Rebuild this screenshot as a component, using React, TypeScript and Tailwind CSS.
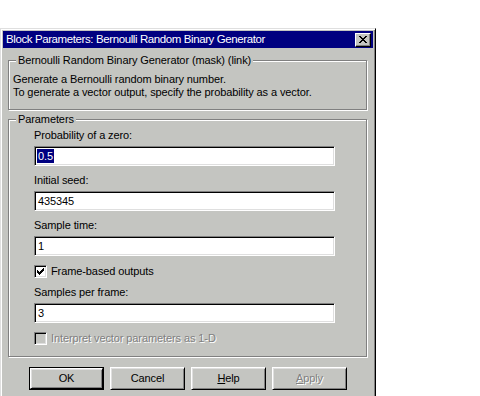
import React from 'react'

const face = 'bg-[#c4c5c1]'
const font = "font-['Liberation_Sans',Arial,sans-serif]"

const Field = ({ value, selected }: { value: string; selected?: boolean }) => (
    <div className="w-[301px] h-[20px] bg-white border border-t-[#808080] border-l-[#808080] border-r-white border-b-white shadow-[inset_1px_1px_0_#000,inset_-1px_-1px_0_#dfdfdf] flex items-center pl-[2px]">
        {selected ? (
            <span className="bg-[#000080] text-white leading-[14px] px-px">{value}</span>
        ) : (
            <span className="text-black leading-[14px] pl-px">{value}</span>
        )}
    </div>
)

const Label = ({ children }: { children: React.ReactNode }) => (
    <div className="h-[13px] leading-[13px] text-black">{children}</div>
)

const Button = ({ children, primary, disabled }: { children: React.ReactNode; primary?: boolean; disabled?: boolean }) => {
    const inner = (
        <div className={`h-full w-full border border-t-white border-l-white border-r-black border-b-black shadow-[inset_1px_1px_0_#dfdfdf,inset_-1px_-1px_0_#808080] flex items-center justify-center ${disabled ? 'text-[#808080] [text-shadow:1px_1px_0_#fff]' : 'text-black'}`}>
            {children}
        </div>
    )
    if (primary) {
        return <div className="w-[75px] h-[23px] border border-black">{inner}</div>
    }
    return <div className="w-[75px] h-[23px]">{inner}</div>
}

const Group = ({ title, className, children }: { title: string; className: string; children: React.ReactNode }) => (
    <div className={`relative border border-[#808080] shadow-[inset_1px_1px_0_#fff,1px_1px_0_#fff] ${className}`}>
        <div className={`absolute -top-[7px] left-[7px] px-[2px] ${face} leading-[13px] text-black`}>{title}</div>
        {children}
    </div>
)

export default function App() {
    return (
        <div className={`w-[480px] h-[396px] bg-white overflow-hidden text-[11px] tracking-[-0.1px] ${font}`}>
            <div className={`mt-[28px] w-[376px] h-[370px] ${face} border border-t-[#dfdfdf] border-l-[#dfdfdf] border-r-black border-b-black shadow-[inset_1px_1px_0_#fff,inset_-1px_-1px_0_#808080] p-[2px] flex flex-col`}>
                {/* title bar */}
                <div className="h-[17px] bg-[#000080] flex items-center justify-between pl-[3px] pr-[2px]">
                    <span className="text-white text-[11.5px] tracking-[-0.4px] leading-[17px]">
                        Block Parameters: Bernoulli Random Binary Generator
                    </span>
                    <div className={`w-[16px] h-[14px] ${face} border border-t-white border-l-white border-r-black border-b-black shadow-[inset_-1px_-1px_0_#808080] flex items-center justify-center`}>
                        <svg width="8" height="7" viewBox="0 0 8 7" shapeRendering="crispEdges">
                            <path d="M0 0h2v1h-2zM6 0h2v1h-2zM1 1h2v1h-2zM5 1h2v1h-2zM2 2h4v1h-4zM3 3h2v1h-2zM2 4h4v1h-4zM1 5h2v1h-2zM5 5h2v1h-2zM0 6h2v1h-2zM6 6h2v1h-2z" fill="#000" />
                        </svg>
                    </div>
                </div>

                <Group title="Bernoulli Random Binary Generator (mask) (link)" className="mt-[12px] ml-[5px] w-[359px] h-[50px] pl-[4px] pt-[12px]">
                    <div className="leading-[13px] text-black">Generate a Bernoulli random binary number.</div>
                    <div className="leading-[13px] text-black">To generate a vector output, specify the probability as a vector.</div>
                </Group>

                <Group title="Parameters" className="mt-[9px] ml-[5px] w-[359px] h-[238px] pl-[25px] pt-[9px]">
                    <Label>Probability of a zero:</Label>
                    <div className="mt-[4px]">
                        <Field value="0.5" selected />
                    </div>
                    <div className="mt-[8px]">
                        <Label>Initial seed:</Label>
                    </div>
                    <div className="mt-[4px]">
                        <Field value="435345" />
                    </div>
                    <div className="mt-[8px]">
                        <Label>Sample time:</Label>
                    </div>
                    <div className="mt-[4px]">
                        <Field value="1" />
                    </div>
                    <div className="mt-[9px] h-[13px] flex items-center gap-[4px]">
                        <div className="w-[13px] h-[13px] bg-white border border-t-[#808080] border-l-[#808080] border-r-white border-b-white shadow-[inset_1px_1px_0_#000,inset_-1px_-1px_0_#dfdfdf] flex items-center justify-center">
                            <svg width="7" height="7" viewBox="0 0 7 7" shapeRendering="crispEdges">
                                <path d="M6 0h1v3h-1zM5 1h1v3h-1zM4 2h1v3h-1zM3 3h1v3h-1zM2 4h1v3h-1zM1 3h1v3h-1zM0 2h1v3h-1z" fill="#000" />
                            </svg>
                        </div>
                        <span className="leading-[13px] text-black">Frame-based outputs</span>
                    </div>
                    <div className="mt-[8px]">
                        <Label>Samples per frame:</Label>
                    </div>
                    <div className="mt-[4px]">
                        <Field value="3" />
                    </div>
                    <div className="mt-[9px] h-[13px] flex items-center gap-[4px]">
                        <div className={`w-[13px] h-[13px] ${face} border border-t-[#808080] border-l-[#808080] border-r-white border-b-white shadow-[inset_1px_1px_0_#000,inset_-1px_-1px_0_#dfdfdf]`} />
                        <span className="leading-[13px] text-[#808080] [text-shadow:1px_1px_0_#fff]">Interpret vector parameters as 1-D</span>
                    </div>
                </Group>

                <div className="mt-[10px] ml-[26px] flex gap-[6px]">
                    <Button primary>OK</Button>
                    <Button>Cancel</Button>
                    <Button>
                        <span><span className="underline">H</span>elp</span>
                    </Button>
                    <Button disabled>
                        <span><span className="underline">A</span>pply</span>
                    </Button>
                </div>
            </div>
        </div>
    )
}
